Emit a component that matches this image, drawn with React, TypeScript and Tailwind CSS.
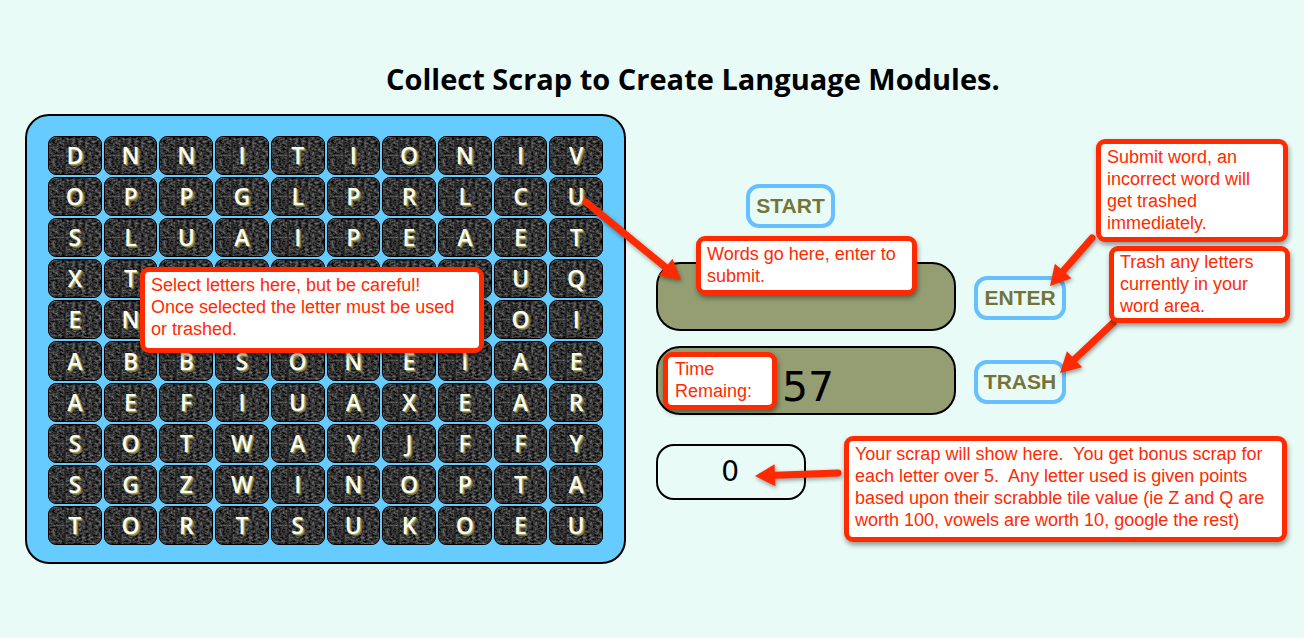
const RED = "#ff2a00";

// blanks sit under the "Select letters" note, the reference shows nothing there
const LETTERS = [
  "DNNITIONIV",
  "OPPGLPRLCU",
  "SLUAIPEAET",
  "XT      UQ",
  "EN      OI",
  "ABBSONEIAE",
  "AEFIUAXEAR",
  "SOTWAYJFFY",
  "SGZWINOPTA",
  "TORTSUKOEU",
];

function Tile({ letter }: { letter: string }) {
  return (
    <div className="relative flex items-center justify-center overflow-hidden rounded-[8px] border border-black bg-[#333333]">
      <svg className="absolute inset-0 h-full w-full">
        <rect width="100%" height="100%" filter="url(#grain)" />
        <line x1="16" y1="0" x2="16" y2="40" stroke="#1c1c1c" strokeWidth="1" />
      </svg>
      <span className="relative font-['Open_Sans',sans-serif] text-[23px] font-semibold leading-none text-[#fbfbee] [text-shadow:1px_1px_0_#a3a368,2px_2px_0_#6f6f3f]">
        {letter}
      </span>
    </div>
  );
}

function ActionButton({ label }: { label: string }) {
  return (
    <div className="flex h-[44px] w-[92px] items-center justify-center rounded-[13px] border-[4px] border-[#66bfff] font-['Liberation_Sans',sans-serif] text-[21px] font-bold text-[#747439]">
      {label}
    </div>
  );
}

function Arrow({ x1, y1, x2, y2 }: { x1: number; y1: number; x2: number; y2: number }) {
  const len = Math.hypot(x2 - x1, y2 - y1);
  const ux = (x2 - x1) / len;
  const uy = (y2 - y1) / len;
  const bx = x2 - ux * 20;
  const by = y2 - uy * 20;
  const head = `${x2},${y2} ${bx - uy * 11},${by + ux * 11} ${bx + uy * 11},${by - ux * 11}`;
  return (
    <g>
      <line x1={x1} y1={y1} x2={bx} y2={by} stroke={RED} strokeWidth="7" strokeLinecap="round" />
      <polygon points={head} fill={RED} />
    </g>
  );
}

function Note({ className, children }: { className: string; children: React.ReactNode }) {
  return (
    <div
      className={`absolute rounded-[9px] border-[5px] border-[#ff2a00] bg-white pl-[6px] font-['Liberation_Sans',sans-serif] text-[18px] leading-[22px] whitespace-nowrap text-[#ff2a00] shadow-[1px_3px_5px_rgba(0,0,0,0.4)] ${className}`}
    >
      {children}
    </div>
  );
}

export default function App() {
  return (
    <div className="relative h-[638px] w-[1304px] overflow-hidden bg-[#e9fbf7]">
      <svg className="absolute h-0 w-0">
        <defs>
          <filter id="grain" x="0" y="0" width="100%" height="100%" colorInterpolationFilters="sRGB">
            <feTurbulence type="fractalNoise" baseFrequency="0.3 0.5" numOctaves="3" seed="4" />
            <feColorMatrix values="0 0 0 0.75 -0.17  0 0 0 0.75 -0.17  0 0 0 0.75 -0.17  0 0 0 0 1" />
          </filter>
        </defs>
      </svg>

      <h1 className="pt-[61px] pl-[386px] font-['Open_Sans',sans-serif] text-[29px] leading-[36px] font-bold whitespace-nowrap text-black">
        Collect Scrap to Create Language Modules.
      </h1>

      <div className="mt-[17px] ml-[25px] flex items-start">
        <div className="h-[450px] w-[601px] rounded-[24px] border-2 border-black bg-[#66ccff] pt-[20px] pl-[21px]">
          <div className="grid h-[409px] w-[555px] grid-cols-10 grid-rows-10 gap-[2px]">
            {LETTERS.join("").split("").map((letter, i) => (
              <Tile key={i} letter={letter} />
            ))}
          </div>
        </div>

        <div className="ml-[30px] grid grid-cols-[300px_92px] gap-x-[18px] pt-[70px]">
          <div className="col-span-2 mb-[34px] ml-[90px] flex h-[44px] w-[89px] items-center justify-center rounded-[13px] border-[4px] border-[#66bfff] font-['Liberation_Sans',sans-serif] text-[21px] font-bold text-[#747439]">
            START
          </div>

          <div className="h-[69px] rounded-[24px] border-2 border-black bg-[#949e72]" />
          <div className="self-start pt-[14px]">
            <ActionButton label="ENTER" />
          </div>

          <div className="mt-[15px] flex h-[69px] items-center rounded-[24px] border-2 border-black bg-[#949e72] pt-[14px] pl-[124px] font-['DejaVu_Sans',sans-serif] text-[41px] text-black">
            57
          </div>
          <div className="mt-[15px] self-start pt-[14px]">
            <ActionButton label="TRASH" />
          </div>

          <div className="col-span-2 mt-[29px] flex h-[56px] w-[150px] items-center justify-end rounded-[18px] border-2 border-black pr-[65px] font-['DejaVu_Sans',sans-serif] text-[28px] text-black">
            0
          </div>
        </div>
      </div>

      <svg className="pointer-events-none absolute inset-0 h-full w-full drop-shadow-[1px_2px_2px_rgba(0,0,0,0.4)]">
        <Arrow x1={586} y1={202} x2={681} y2={280} />
        <Arrow x1={1092} y1={238} x2={1050} y2={286} />
        <Arrow x1={1113} y1={323} x2={1060} y2={373} />
        <Arrow x1={838} y1={473} x2={755} y2={476} />
      </svg>

      <Note className="top-[267px] left-[140px] h-[86px] w-[344px] pt-[2px]">
        Select letters here, but be careful!
        <br />
        Once selected the letter must be used
        <br />
        or trashed.
      </Note>
      <Note className="top-[236px] left-[696px] h-[59px] w-[221px] pt-[2px]">
        Words go here, enter to
        <br />
        submit.
      </Note>
      <Note className="top-[139px] left-[1096px] h-[103px] w-[192px] pt-[2px]">
        Submit word, an
        <br />
        incorrect word will
        <br />
        get trashed
        <br />
        immediately.
      </Note>
      <Note className="top-[246px] left-[1109px] h-[77px] w-[181px]">
        Trash any letters
        <br />
        currently in your
        <br />
        word area.
      </Note>
      <Note className="top-[352px] left-[663px] h-[58px] w-[114px] pt-[1px] pl-[7px]">
        Time
        <br />
        Remaing:
      </Note>
      <Note className="top-[436px] left-[844px] h-[106px] w-[443px] pt-[2px]">
        Your scrap will show here.&nbsp; You get bonus scrap for
        <br />
        each letter over 5.&nbsp; Any letter used is given points
        <br />
        based upon their scrabble tile value (ie Z and Q are
        <br />
        worth 100, vowels are worth 10, google the rest)
      </Note>
    </div>
  );
}
